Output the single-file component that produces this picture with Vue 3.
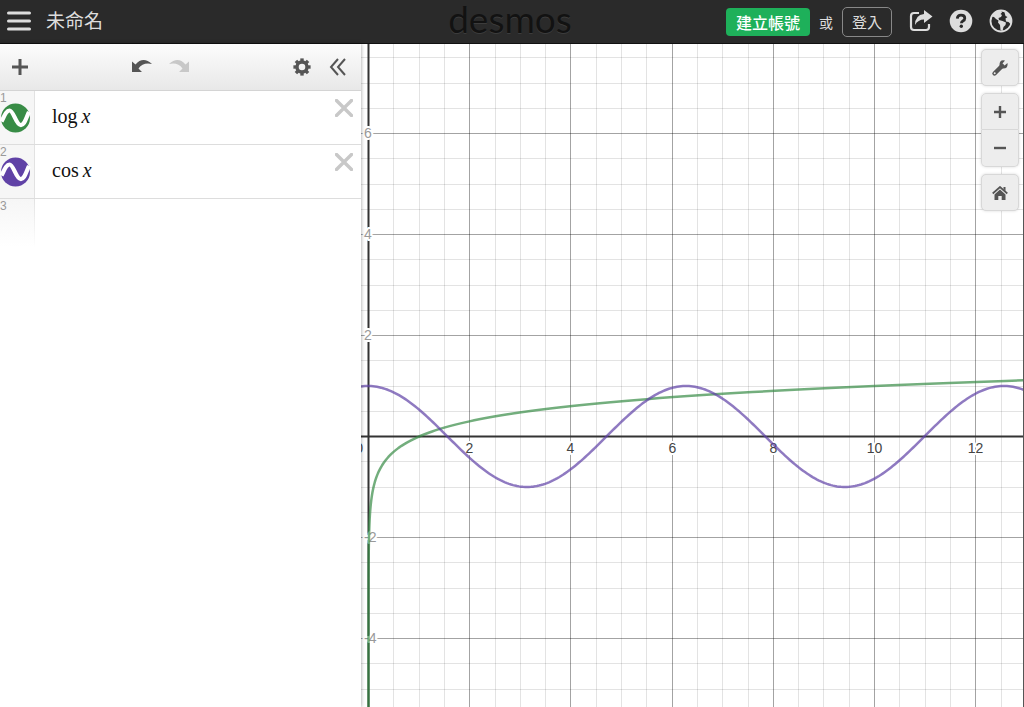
<script setup>
import { ref, computed, onMounted, onBeforeUnmount } from 'vue'

const expressions = [
  { id: 1, fn: 'log', color: '#388c46' },
  { id: 2, fn: 'cos', color: '#6042a6' }
]

const plot = ref(null)
const size = ref({ w: 663, h: 663 })
let observer
onMounted(() => {
  const measure = () => {
    size.value = { w: plot.value.clientWidth, h: plot.value.clientHeight }
  }
  measure()
  observer = new ResizeObserver(measure)
  observer.observe(plot.value)
})
onBeforeUnmount(() => observer.disconnect())

const unitX = 50.6
const unitY = 50.5
const originX = 7
const originY = 392
const px = x => originX + x * unitX
const py = y => originY - y * unitY
const snap = v => Math.round(v) + 0.5

const columns = computed(() => {
  const out = []
  for (let i = 1; px(i / 2) < size.value.w; i++) out.push({ v: i / 2, at: snap(px(i / 2)), major: i % 4 === 0 })
  return out
})
const rows = computed(() => {
  const out = []
  const top = Math.floor((originY / unitY) * 2)
  for (let i = top; py(i / 2) < size.value.h; i--) {
    if (i !== 0) out.push({ v: i / 2, at: snap(py(i / 2)), major: i % 4 === 0 })
  }
  return out
})
const cosPath = computed(() => {
  const pts = []
  for (let p = 0; p <= size.value.w + 2; p += 2) {
    pts.push(`${p},${(py(Math.cos((p - originX) / unitX)) + 0.5).toFixed(2)}`)
  }
  return 'M' + pts.join('L')
})
const logPath = computed(() => {
  const pts = []
  const end = Math.log10(size.value.w / unitX)
  for (let y = -8; y <= end + 0.02; y += 0.02) {
    pts.push(`${(px(10 ** y) + 0.5).toFixed(2)},${(py(y) + 0.5).toFixed(2)}`)
  }
  return 'M' + pts.join('L')
})
</script>

<template>
  <div class="app">
    <header class="header">
      <div class="side">
        <button class="icon" aria-label="選單">
          <svg width="24" height="22" viewBox="0 0 24 22"><path d="M1.500 2h21M1.500 10h21M1.500 18h21" stroke="#ddd" stroke-width="3" stroke-linecap="round" /></svg>
        </button>
        <span class="title">未命名</span>
      </div>
      <div class="logo">desmos</div>
      <div class="side account">
        <button class="signup">建立帳號</button>
        <span class="or">或</span>
        <button class="login">登入</button>
        <button class="icon share" aria-label="分享">
          <svg width="24" height="24" viewBox="0 0 24 24"><path d="M10 3H5Q2 3 2 6v11q0 3 3 3h12q3 0 3-3v-3" fill="none" stroke="#ddd" stroke-width="2.200" /><path d="M15 0l8.500 6.500L15 13V9.500q-6 0-9 5.500 0-10 9-11z" fill="#ddd" /></svg>
        </button>
        <button class="icon" aria-label="說明">
          <svg width="24" height="26" viewBox="0 0 24 26"><circle cx="12" cy="12" r="11.300" fill="#ddd" /><path d="M8.300 9.600Q8.500 6.200 12 6.200q3.800 0 3.800 3 0 1.700-1.900 2.800-1.500.9-1.500 2.300" fill="none" stroke="#2a2a2a" stroke-width="2.800" /><circle cx="12.300" cy="17.300" r="1.700" fill="#2a2a2a" /></svg>
        </button>
        <button class="icon" aria-label="語言">
          <svg width="24" height="26" viewBox="0 0 24 26"><circle cx="12" cy="12" r="10.500" fill="none" stroke="#ddd" stroke-width="1.800" /><path d="M2.500 7.500L6 3l4-2 2 .5 1 2-1.500 1.500 1.500 1-1 2-2.500 1 .5 2 3.500 1 3.500 1.500-.5 2.500-2 2-1 4-2-1-.5-5-2-2.500.5-2L7 10 5 8zM15 1.500l5 3 3 7-1.500 3.500-2-2-2.500-.5-.5-3 2-1.500-2-1z" fill="#ddd" /></svg>
        </button>
      </div>
    </header>

    <main class="body">
      <section class="panel">
        <div class="toolbar">
          <button class="icon" aria-label="新增">
            <svg width="18" height="18" viewBox="0 0 18 18"><path d="M9 1v16M1 9h16" stroke="#555" stroke-width="3" /></svg>
          </button>
          <div class="history">
            <button class="icon" aria-label="復原">
              <svg width="22" height="16" viewBox="0 0 22 16"><path d="M1 2.500v10.500h10L7.500 9.500Q12 3 21 5 12-3 4.500 5.500z" fill="#555" /></svg>
            </button>
            <button class="icon" aria-label="重做">
              <svg width="22" height="16" viewBox="0 0 22 16"><path d="M21 2.500v10.500H11l3.500-3.500Q10 3 1 5 10-3 17.500 5.500z" fill="#c8c8c8" /></svg>
            </button>
          </div>
          <button class="icon gear" aria-label="設定">
            <svg width="18" height="18" viewBox="0 0 18 18"><circle cx="9" cy="9" r="5" fill="none" stroke="#555" stroke-width="3.400" /><g stroke="#555" stroke-width="3.400"><path v-for="n in 8" :key="n" d="M9 .4v3" :transform="`rotate(${n * 45} 9 9)`" /></g></svg>
          </button>
          <button class="icon" aria-label="收合">
            <svg width="18" height="18" viewBox="0 0 18 18"><path d="M9 1L2 9l7 8M16 1L9 9l7 8" fill="none" stroke="#555" stroke-width="2" /></svg>
          </button>
        </div>

        <ol class="list">
          <li v-for="e in expressions" :key="e.id" class="row">
            <div class="tab">
              <span class="num">{{ e.id }}</span>
              <button class="icon" :aria-label="e.fn">
                <svg width="31" height="30" viewBox="0 0 31 30"><circle cx="15.500" cy="15" r="14.500" :fill="e.color" /><path d="M1.500 18.500C4 14 6 7.500 9.500 7.500c4 0 6.500 14 11 14.500 4 .5 5.500-7 8.500-13" fill="none" stroke="#fff" stroke-width="4.200" /></svg>
              </button>
            </div>
            <div class="math">{{ e.fn }}<i>x</i></div>
            <button class="icon close" aria-label="刪除">
              <svg width="18" height="18" viewBox="0 0 18 18"><path d="M1.500 1.500l15 15M16.500 1.500l-15 15" stroke="#c8c8c8" stroke-width="3.400" stroke-linecap="square" /></svg>
            </button>
          </li>
          <li class="row blank">
            <div class="tab"><span class="num">3</span></div>
          </li>
        </ol>
      </section>

      <section ref="plot" class="plot">
        <svg class="graph" width="100%" height="100%">
          <g v-for="major in [false, true]" :key="major" :class="major ? 'major' : 'minor'">
            <template v-for="c in columns" :key="c.v">
              <line v-if="c.major === major" :x1="c.at" :x2="c.at" y1="0" y2="100%" />
            </template>
            <template v-for="r in rows" :key="r.v">
              <line v-if="r.major === major" x1="0" x2="100%" :y1="r.at" :y2="r.at" />
            </template>
          </g>
          <g class="axis">
            <line x1="7.500" x2="7.500" y1="0" y2="100%" />
            <line x1="0" x2="100%" y1="392.500" y2="392.500" />
          </g>
          <g class="labels">
            <text x="2" y="409" text-anchor="end">0</text>
            <template v-for="c in columns" :key="c.v">
              <text v-if="c.major" :x="c.at" y="409" text-anchor="middle">{{ c.v }}</text>
            </template>
            <template v-for="r in rows" :key="r.v">
              <text v-if="r.major" class="ylabel" :x="3" :y="r.at + 4">{{ r.v }}</text>
            </template>
          </g>
          <path :d="logPath" class="curve" stroke="#388c46" />
          <path :d="cosPath" class="curve" stroke="#6042a6" />
        </svg>

        <div class="controls">
          <button class="tool" aria-label="圖形設定">
            <svg width="18" height="18" viewBox="0 0 18 18"><path d="M3.500 14.500L11 7" stroke="#555" stroke-width="4.400" stroke-linecap="round" /><path d="M16.500 4L13.500 6.500 11.500 4.500 14 1.500Q8.500 0 8.500 6q0 3.500 3.500 3.500 5.500 0 4.500-5.500z" fill="#555" /><circle cx="3.700" cy="14.300" r="1" fill="#ededed" /></svg>
          </button>
          <div class="zoom">
            <button class="tool" aria-label="放大">
              <svg width="12" height="12" viewBox="0 0 12 12"><path d="M6 0v12M0 6h12" stroke="#555" stroke-width="2.400" /></svg>
            </button>
            <button class="tool" aria-label="縮小">
              <svg width="12" height="12" viewBox="0 0 12 12"><path d="M0 6h12" stroke="#555" stroke-width="2.400" /></svg>
            </button>
          </div>
          <button class="tool" aria-label="預設檢視">
            <svg width="16" height="14" viewBox="0 0 16 14"><path d="M.7 7.500L8 1l7.300 6.500" fill="none" stroke="#555" stroke-width="1.700" /><path d="M11.500 1h2v4l-2-2zM8 3.500l5.500 5V14H9.700v-4H6.300v4H2.500V8.500z" fill="#555" /></svg>
          </button>
        </div>
      </section>
    </main>
  </div>
</template>

<style>
body {
  overflow: hidden;
}
</style>

<style scoped>
.app {
  height: 100vh;
  display: flex;
  flex-direction: column;
  background: #fff;
  font-family: "Liberation Sans", "Noto Sans CJK TC", sans-serif;
}
button {
  font: inherit;
  padding: 0;
  margin: 0;
  border: 0;
  background: none;
  cursor: pointer;
}
.icon {
  display: flex;
  flex: none;
}
.header {
  flex: none;
  box-sizing: border-box;
  height: 44px;
  display: flex;
  align-items: center;
  padding: 0 11px 0 7px;
  background: #2a2a2a;
  border-bottom: 1px solid #111;
  color: #ddd;
}
.side {
  flex: 1 1 0;
  display: flex;
  align-items: center;
}
.title {
  margin-left: 15px;
  font-size: 19px;
  line-height: 24px;
}
.logo {
  padding-bottom: 6px;
  font-family: Lato, sans-serif;
  font-size: 37px;
  line-height: 36px;
  color: #121212;
  text-shadow: 0 1px 0 #3c3c3c;
}
.account {
  justify-content: flex-end;
  gap: 16px;
  font-size: 14px;
}
.signup {
  height: 28px;
  width: 84px;
  flex: none;
  border-radius: 4px;
  background: #1eb05a;
  color: #fff;
  font-size: 16px;
  font-weight: 500;
}
.or {
  margin: 0 -7px;
}
.login {
  box-sizing: border-box;
  height: 30px;
  width: 50px;
  flex: none;
  border: 1px solid #888;
  border-radius: 5px;
  color: #ddd;
  font-size: 15px;
}
.share {
  margin-left: 1px;
}
.body {
  flex: 1;
  min-height: 0;
  display: flex;
}
.panel {
  position: relative;
  flex: none;
  width: 361px;
  background: #fff;
  box-shadow: 0 0 4px rgba(0, 0, 0, 0.4);
  z-index: 1;
}
.toolbar {
  box-sizing: border-box;
  height: 47px;
  display: flex;
  align-items: center;
  padding: 0 14px 0 11px;
  background: linear-gradient(#fcfcfc, #e8e8e8);
  border-bottom: 1px solid #d4d4d4;
}
.history {
  flex: 1;
  display: flex;
  gap: 15px;
  margin-left: 102px;
}
.gear {
  margin-right: 18px;
}
.list {
  list-style: none;
  margin: 0;
  padding: 0;
}
.row {
  box-sizing: border-box;
  height: 54px;
  display: flex;
  border-bottom: 1px solid #ddd;
}
.tab {
  box-sizing: border-box;
  width: 35px;
  background: #f6f6f6;
  border-right: 1px solid #e2e2e2;
}
.num {
  display: block;
  height: 12px;
  font-size: 12px;
  line-height: 15px;
  color: #999;
}
.math {
  flex: 1;
  padding-left: 17px;
  font-family: "Liberation Serif", serif;
  font-size: 20px;
  line-height: 51px;
  color: #111;
}
.math i {
  margin-left: 4px;
}
.close {
  align-self: flex-start;
  margin: 8px 8px 0 0;
}
.blank {
  height: 48px;
  border-bottom: 0;
}
.blank .tab {
  background: linear-gradient(#f6f6f6, #fff);
  border-image: linear-gradient(#e2e2e2, #fff) 1;
}
.plot {
  position: relative;
  flex: 1;
  min-width: 0;
  overflow: hidden;
  border-right: 1px solid #555;
}
.graph {
  position: absolute;
  inset: 0;
  display: block;
}
.minor line {
  stroke: #000;
  stroke-opacity: 0.11;
}
.major line {
  stroke: #000;
  stroke-opacity: 0.36;
}
.axis line {
  stroke: #333;
  stroke-width: 2px;
}
.labels text {
  font-size: 14px;
  fill: #444;
  stroke: #fff;
  stroke-width: 4px;
  paint-order: stroke;
  stroke-linejoin: round;
}
.labels .ylabel {
  fill: #999;
}
.curve {
  fill: none;
  stroke-width: 2.500px;
  stroke-opacity: 0.7;
}
.controls {
  position: absolute;
  top: 5px;
  right: 4px;
  display: flex;
  flex-direction: column;
  gap: 7px;
}
.tool {
  box-sizing: border-box;
  width: 38px;
  height: 37px;
  display: flex;
  align-items: center;
  justify-content: center;
  background: #ededed;
  border: 1px solid #d8d8d8;
  border-radius: 5px;
  box-shadow: 0 0 3px rgba(0, 0, 0, 0.15);
}
.zoom {
  border-radius: 5px;
  box-shadow: 0 0 3px rgba(0, 0, 0, 0.15);
}
.zoom .tool {
  box-shadow: none;
}
.zoom .tool:first-child {
  border-radius: 5px 5px 0 0;
}
.zoom .tool:last-child {
  border-top: 0;
  border-radius: 0 0 5px 5px;
}
</style>
